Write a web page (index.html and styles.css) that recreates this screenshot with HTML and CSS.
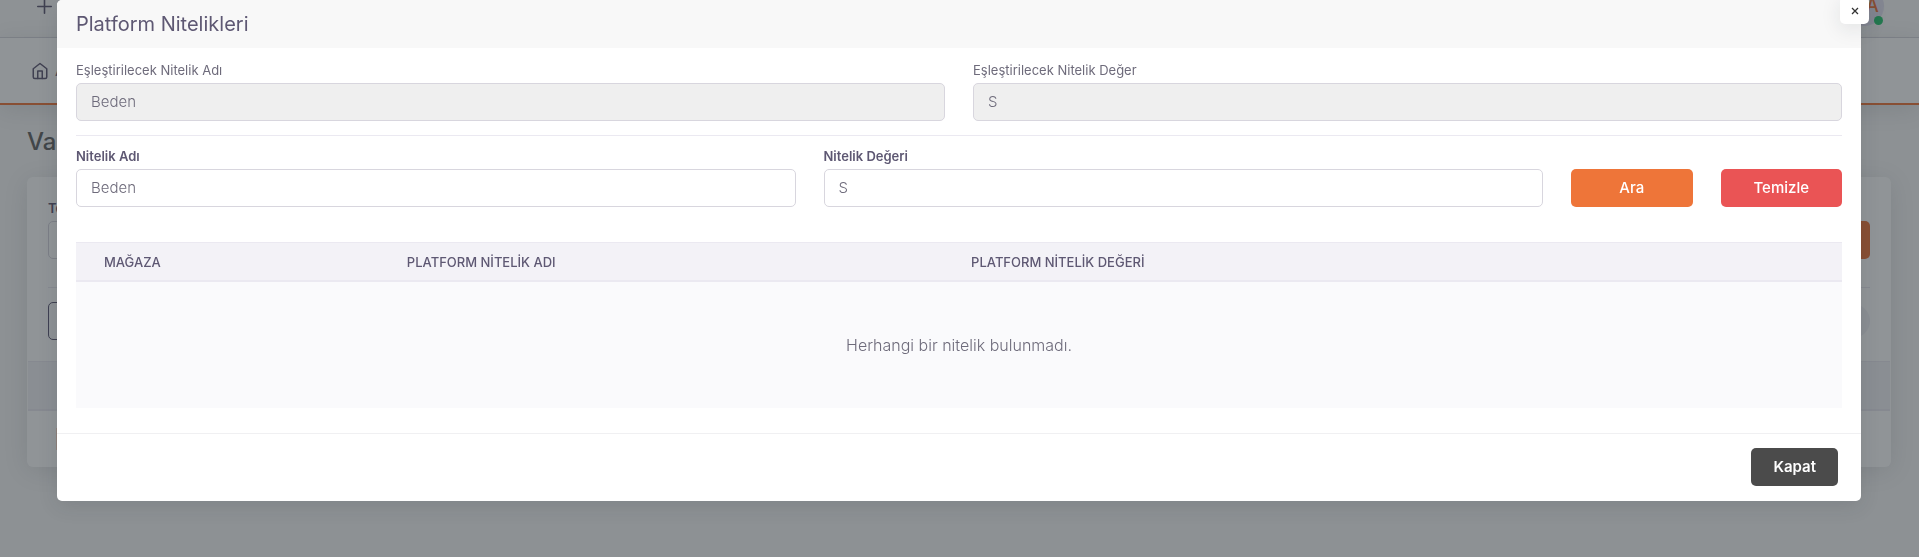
FILE: index.html
```html
<!DOCTYPE html>
<html lang="tr">
<head>
<meta charset="utf-8">
<meta name="viewport" content="width=device-width, initial-scale=1">
<title>Platform Nitelikleri</title>
<link rel="stylesheet" href="styles.css">
</head>
<body>
<div class="page" inert>
  <header class="navbar">
    <svg class="navbar-plus" viewBox="0 0 24 24" aria-hidden="true"><path d="M12 3.500v17M3.500 12h17"/></svg>
    <span class="avatar">A<span class="avatar-status"></span></span>
  </header>
  <nav class="menu">
    <a class="menu-link" href="#">
      <svg class="menu-icon" viewBox="0 0 24 24" aria-hidden="true"><path d="M3 9l9-7 9 7v11a2 2 0 0 1-2 2H5a2 2 0 0 1-2-2z"/><path d="M9 22V12h6v10"/></svg>
      <span>A</span>
    </a>
  </nav>
  <main class="content">
    <h1 class="page-title">Va</h1>
    <section class="card">
      <div class="card-body">
        <label class="label label-strong" for="page-search">Te</label>
        <div class="page-row">
          <input class="input page-input" id="page-search" type="text">
          <button class="btn btn-primary page-btn" type="button" aria-label="Ara"></button>
        </div>
        <hr class="rule page-rule">
        <div class="page-row">
          <button class="btn btn-outline" type="button" aria-label="Filtre"></button>
          <span class="pill"></span>
        </div>
      </div>
      <div class="page-thead"></div>
      <div class="page-trow"><span class="chip"></span></div>
    </section>
  </main>
</div>

<div class="overlay">
  <div class="modal" role="dialog" aria-modal="true" aria-labelledby="modal-title">
    <div class="modal-header">
      <h2 class="modal-title" id="modal-title">Platform Nitelikleri</h2>
      <button class="modal-close" type="button" aria-label="Kapat">
        <svg class="close-icon" viewBox="0 0 8 8" aria-hidden="true"><path d="M1 1l6 6M7 1l-6 6"/></svg>
      </button>
    </div>
    <div class="modal-body">
      <div class="grid">
        <div class="half">
          <label class="label" for="match-name">Eşleştirilecek Nitelik Adı</label>
          <input class="input" id="match-name" type="text" value="Beden" disabled>
        </div>
        <div class="half">
          <label class="label" for="match-value">Eşleştirilecek Nitelik Değer</label>
          <input class="input" id="match-value" type="text" value="S" disabled>
        </div>
      </div>
      <hr class="rule">
      <form class="grid">
        <div class="five">
          <label class="label label-strong" for="attr-name">Nitelik Adı</label>
          <input class="input" id="attr-name" type="text" value="Beden">
        </div>
        <div class="five">
          <label class="label label-strong" for="attr-value">Nitelik Değeri</label>
          <input class="input" id="attr-value" type="text" value="S">
        </div>
        <button class="btn btn-primary" type="button">Ara</button>
        <button class="btn btn-danger" type="button">Temizle</button>
      </form>
      <table class="table">
        <thead>
          <tr><th class="col-store">MAĞAZA</th><th class="col-name">PLATFORM NİTELİK ADI</th><th>PLATFORM NİTELİK DEĞERİ</th></tr>
        </thead>
        <tbody>
          <tr><td class="empty" colspan="3">Herhangi bir nitelik bulunmadı.</td></tr>
        </tbody>
      </table>
    </div>
    <div class="modal-footer">
      <button class="btn btn-dark" type="button">Kapat</button>
    </div>
  </div>
</div>
</body>
</html>
```
FILE: styles.css
```css
* { box-sizing: border-box; }

body {
  margin: 0;
  background: #f8f8f8;
  color: #6e6b7b;
  font: 400 15px/22px Inter, "Open Sans", sans-serif;
}

/* Page behind the dialog */
.page { height: 100vh; overflow: hidden; }

.navbar {
  display: flex;
  align-items: center;
  justify-content: space-between;
  height: 63px;
  margin-top: -25px;
  padding: 0 35px;
  background: #fafafa;
  border-bottom: 1px solid #dcdce2;
}
.navbar-plus { width: 19px; height: 19px; fill: none; stroke: #5e5873; stroke-width: 2; stroke-linecap: round; }
.avatar {
  position: relative;
  width: 40px;
  height: 40px;
  padding-left: 22px;
  border-radius: 50%;
  background: #e4e2f2;
  color: #ee7539;
  font-size: 18px;
  font-weight: 500;
  line-height: 40px;
}
.avatar-status {
  position: absolute;
  right: 1px;
  bottom: 1px;
  width: 9px;
  height: 9px;
  border-radius: 50%;
  background: #28c76f;
}

.menu {
  display: flex;
  align-items: center;
  height: 67px;
  padding: 0 31px;
  background: #fff;
  border-bottom: 2px solid #ee7539;
  box-shadow: 0 4px 24px rgba(34, 41, 47, .12);
}
.menu-link { display: flex; align-items: center; gap: 6px; color: #6e6b7b; text-decoration: none; }
.menu-icon { width: 18px; height: 18px; fill: none; stroke: #5e5873; stroke-width: 2; stroke-linecap: round; stroke-linejoin: round; }

.content { padding: 20px 28px 0 27px; }
.page-title { margin: 0 0 19px; color: #636363; font-size: 24px; font-weight: 500; line-height: 33px; }
.card { border-radius: 6px; background: #fff; box-shadow: 0 4px 24px rgba(34, 41, 47, .12); }
.card-body { padding: 22px 21px 21px; }
.page-row { display: flex; align-items: center; justify-content: space-between; }
.page-input { width: 40%; }
.page-btn { width: 122px; }
.btn-outline { width: 122px; }
.pill { width: 70px; height: 34px; border-radius: 17px; background: #f3f2f7; }
.page-thead { height: 50px; margin: 0 1px; background: #f3f2f7; border-top: 1px solid #ebe9f1; border-bottom: 2px solid #ebe9f1; }
.page-trow { display: flex; align-items: center; height: 56px; padding-left: 29px; }
.chip { width: 60px; height: 22px; background: #fbd9c8; }

/* Dialog */
.overlay { position: fixed; inset: 0; background: rgba(34, 41, 47, .5); }
.modal {
  position: relative;
  margin: 0 58px 0 57px;
  border-radius: 5px;
  background: #fff;
  box-shadow: 0 5px 20px rgba(34, 41, 47, .12);
}
.modal-header { padding: 12px 19px; border-radius: 5px 5px 0 0; background: #f8f8f8; }
.modal-title { margin: 0; color: #5e5873; font-size: 20px; font-weight: 400; line-height: 24px; }
.modal-close {
  position: absolute;
  top: -4px;
  right: -8px;
  display: grid;
  place-items: center;
  width: 29px;
  height: 28px;
  padding: 1px 0 0;
  border: 0;
  border-radius: 5px;
  background: #fff;
  box-shadow: 0 5px 20px rgba(34, 41, 47, .1);
}
.close-icon { width: 8px; height: 8px; fill: none; stroke: #333; stroke-width: 1.3; }

.modal-body { padding: 13px 19px 25px; }
.grid { display: grid; grid-template-columns: repeat(12, minmax(0, 1fr)); column-gap: 28px; align-items: end; }
.half { grid-column: span 6; }
.five { grid-column: span 5; }

.label { display: block; margin-bottom: 4px; font-size: 13px; line-height: 18px; }
.label-strong { color: #5e5873; font-weight: 600; }
.input {
  display: block;
  width: 100%;
  height: 38px;
  padding: 0 14px 2px;
  border: 1px solid #d8d6de;
  border-radius: 5px;
  background: #fff;
  color: #6e6b7b;
  font: inherit;
  font-weight: 300;
}
.input:disabled { background: #efefef; }
.rule { height: 1px; margin: 14px 0 11px; border: 0; background: #ebe9f1; }
.page-rule { margin: 28px 0 14px; }

.btn {
  height: 38px;
  padding: 0;
  border: 0;
  border-radius: 5px;
  color: #fff;
  font: inherit;
  font-weight: 500;
}
.btn-primary { background: #ee7539; }
.btn-danger { background: #ea5455; }
.btn-dark { padding: 0 22px; background: #4b4b4b; font-weight: 600; }
.btn-outline { border: 1px solid #5e5873; background: #f8f8fa; }

.table { width: 100%; margin-top: 35px; border-collapse: separate; border-spacing: 0; table-layout: fixed; }
.table th {
  height: 40px;
  padding: 0 28px;
  border-top: 1px solid #ebe9f1;
  border-bottom: 2px solid #ebe9f1;
  background: #f3f2f7;
  color: #5e5873;
  font-size: 13px;
  font-weight: 500;
  letter-spacing: normal;
  line-height: 18px;
  text-align: left;
}
.col-store { width: 17.15%; }
.col-name { width: 31.95%; }
.table .empty { height: 126px; padding: 0; background: #fafafc; font-size: 16px; font-weight: 300; text-align: center; }

.modal-footer { display: flex; justify-content: flex-end; padding: 14px 23px 15px; border-top: 1px solid #f0f0f2; }
```
